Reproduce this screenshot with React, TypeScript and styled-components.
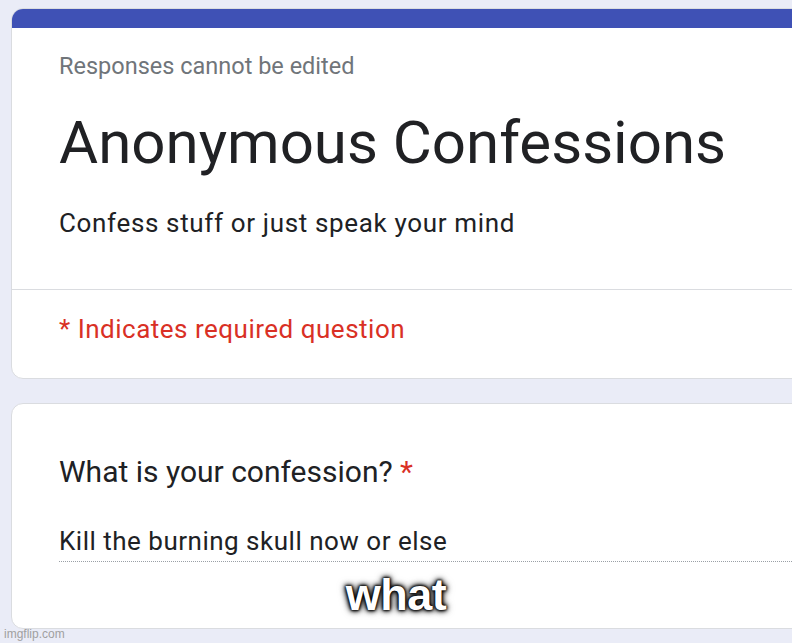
import React from "react";
import styled, { createGlobalStyle } from "styled-components";

const Global = createGlobalStyle`
  html, body {
    margin: 0;
    padding: 0;
    background: #eaecf7;
    overflow: hidden;
  }
  body {
    font-family: Roboto, "Liberation Sans", Arial, sans-serif;
    color: #202124;
  }
`;

const Page = styled.div`
  position: relative;
  width: 792px;
  height: 643px;
  padding: 8px 0 0 11px;
  box-sizing: border-box;
  display: flex;
  flex-direction: column;
  gap: 24px;
`;

const Card = styled.section`
  width: 820px;
  background: #ffffff;
  border: 1px solid #dadce0;
  border-radius: 12px;
  box-sizing: border-box;
  overflow: hidden;
`;

const HeaderBar = styled.div`
  height: 19px;
  background: #3f51b5;
`;

const Block = styled.div<{ $pt: number; $pb: number }>`
  padding: ${(p) => p.$pt}px 0 ${(p) => p.$pb}px 47px;
  display: flex;
  flex-direction: column;
`;

const Note = styled.div`
  font-size: 23.5px;
  line-height: 32px;
  color: #70757a;
`;

const Title = styled.h1`
  margin: 25px 0 0;
  font-size: 60px;
  line-height: 72px;
  font-weight: 400;
  color: #202124;
`;

const Description = styled.div`
  margin-top: 28px;
  font-size: 26px;
  line-height: 32px;
  letter-spacing: 0.65px;
  color: #202124;
`;

const Divider = styled.hr`
  margin: 0;
  border: none;
  border-top: 1px solid #dadce0;
`;

const Required = styled.div`
  font-size: 26px;
  line-height: 32px;
  letter-spacing: 0.5px;
  color: #d93025;
`;

const Question = styled.div`
  font-size: 30px;
  line-height: 36px;
  color: #202124;
`;

const Star = styled.span`
  color: #d93025;
`;

const Answer = styled.div`
  margin-top: 35px;
  font-size: 26px;
  line-height: 32px;
  letter-spacing: 0.5px;
  padding-bottom: 4px;
  border-bottom: 1px dotted #9aa0a6;
  color: #202124;
`;

const Caption = styled.div`
  position: absolute;
  left: 0;
  right: 0;
  top: 569px;
  text-align: center;
  font-family: "Liberation Sans", Arial, sans-serif;
  font-weight: 700;
  font-size: 45px;
  line-height: 52px;
  color: #ffffff;
  letter-spacing: -0.5px;
  text-shadow: 0 0 2px #000, 0 0 3px #000, 0 0 4px #000, 0 0 6px #000,
    0 0 8px rgba(0, 0, 0, 0.6);
`;

const Watermark = styled.div`
  position: absolute;
  left: 4px;
  top: 626px;
  font-family: "Liberation Sans", Arial, sans-serif;
  font-size: 12px;
  line-height: 16px;
  color: #a0a0a0;
`;

export default function App() {
  return (
    <>
      <Global />
      <Page>
        <Card>
          <HeaderBar />
          <Block $pt={22} $pb={50}>
            <Note>Responses cannot be edited</Note>
            <Title>Anonymous Confessions</Title>
            <Description>Confess stuff or just speak your mind</Description>
          </Block>
          <Divider />
          <Block $pt={23} $pb={33}>
            <Required>* Indicates required question</Required>
          </Block>
        </Card>
        <Card>
          <Block $pt={50} $pb={66}>
            <Question>
              What is your confession? <Star>*</Star>
            </Question>
            <Answer>Kill the burning skull now or else</Answer>
          </Block>
        </Card>
        <Caption>what</Caption>
        <Watermark>imgflip.com</Watermark>
      </Page>
    </>
  );
}
